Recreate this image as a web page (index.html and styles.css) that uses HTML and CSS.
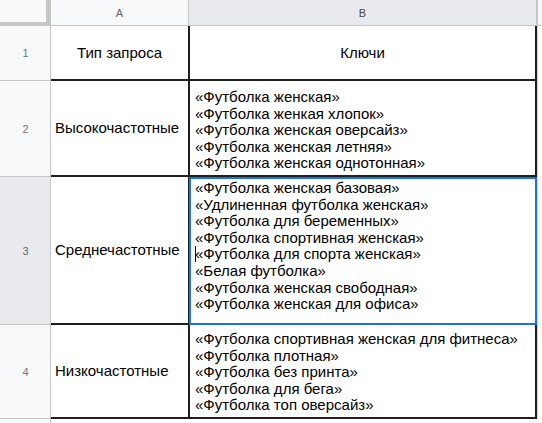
FILE: index.html
```html
<!DOCTYPE html>
<html lang="ru">
<head>
<meta charset="utf-8">
<title>Ключи</title>
<link rel="stylesheet" href="styles.css">
</head>
<body>
<div class="sheet">
  <div class="corner"></div>
  <div class="colhead">A</div>
  <div class="colhead sel">B</div>
  <div class="colhead rest"></div>

  <div class="rowhead">1</div>
  <div class="cell a center">Тип запроса</div>
  <div class="cell b center">Ключи</div>
  <div class="restcell"></div>

  <div class="rowhead">2</div>
  <div class="cell a">Высокочастотные</div>
  <div class="cell b bottom">
    <div>«Футболка женская»</div>
    <div>«Футболка женкая хлопок»</div>
    <div>«Футболка женская оверсайз»</div>
    <div>«Футболка женская летняя»</div>
    <div>«Футболка женская однотонная»</div>
  </div>
  <div class="restcell"></div>

  <div class="rowhead sel">3</div>
  <div class="cell a">Среднечастотные</div>
  <div class="cell b top active">
    <div>«Футболка женская базовая»</div>
    <div>«Удлиненная футболка женская»</div>
    <div>«Футболка для беременных»</div>
    <div>«Футболка спортивная женская»</div>
    <div><span class="caret"></span>«Футболка для спорта женская»</div>
    <div>«Белая футболка»</div>
    <div>«Футболка женская свободная»</div>
    <div>«Футболка женская для офиса»</div>
  </div>
  <div class="restcell"></div>

  <div class="rowhead">4</div>
  <div class="cell a">Низкочастотные</div>
  <div class="cell b bottom">
    <div>«Футболка спортивная женская для фитнеса»</div>
    <div>«Футболка плотная»</div>
    <div>«Футболка без принта»</div>
    <div>«Футболка для бега»</div>
    <div>«Футболка топ оверсайз»</div>
  </div>
  <div class="restcell"></div>

  <div class="rowhead last"></div>
  <div class="lastcell"></div>
  <div class="lastcell"></div>
  <div class="lastcell"></div>
</div>
</body>
</html>
```

FILE: styles.css
```css
* { box-sizing: border-box; }
html, body { margin: 0; padding: 0; background: #ffffff; }
body { width: 542px; height: 423px; overflow: hidden; font-family: "Liberation Sans", Arial, sans-serif; }

.sheet {
  display: grid;
  grid-template-columns: 51px 138px 348px 5px;
  grid-template-rows: 26px 55px 96px 148px 94px 4px;
  width: 542px;
  height: 423px;
}

.corner {
  background: #f8f9fa;
  border-right: 5px solid #c4c7c5;
  border-bottom: 4px solid #c4c7c5;
}

.colhead {
  background: #f8f9fa;
  border-bottom: 1px solid #c4c7c5;
  border-right: 1px solid #c4c7c5;
  color: #5f6368;
  font-size: 11px;
  display: flex;
  align-items: center;
  justify-content: center;
  padding-top: 1px;
}
.colhead.sel { background: #e8eaed; color: #444746; }
.colhead.rest { border-right: 0; border-left: 1px solid #c4c7c5; }

.rowhead {
  background: #f8f9fa;
  border-right: 1px solid #c4c7c5;
  border-bottom: 1px solid #c4c7c5;
  color: #70757a;
  font-size: 11px;
  display: flex;
  align-items: center;
  justify-content: center;
  padding-left: 1px;
}
.rowhead.sel { background: #e8eaed; color: #5f6368; }
.rowhead.last { border-bottom: 0; }

.cell {
  font-size: 15px;
  line-height: 16.6px;
  color: #000;
  border-bottom: 2px solid #1f1f1f;
  display: flex;
  flex-direction: column;
  white-space: nowrap;
}
.cell.a {
  justify-content: center;
  padding-left: 4px;
  border-right: 1px solid #1f1f1f;
}
.cell.b {
  padding-left: 5px;
  border-left: 1px solid #1f1f1f;
  border-right: 2px solid #1f1f1f;
}
.cell.center { align-items: center; justify-content: center; padding-left: 0; padding-top: 2px; }
.cell.bottom { justify-content: flex-end; padding-bottom: 3px; }
.cell.top { justify-content: flex-start; padding-top: 1px; }
.cell.active {
  border: 2px solid #1a73e8;
  padding-left: 4px;
}

.caret {
  display: inline-block;
  width: 1px;
  height: 16px;
  background: #000;
  vertical-align: -3px;
  margin-right: -1px;
}

.restcell {
  border-left: 1px solid #d5d5d5;
  background: #fff;
}

.lastcell { background: #fff; }
```
